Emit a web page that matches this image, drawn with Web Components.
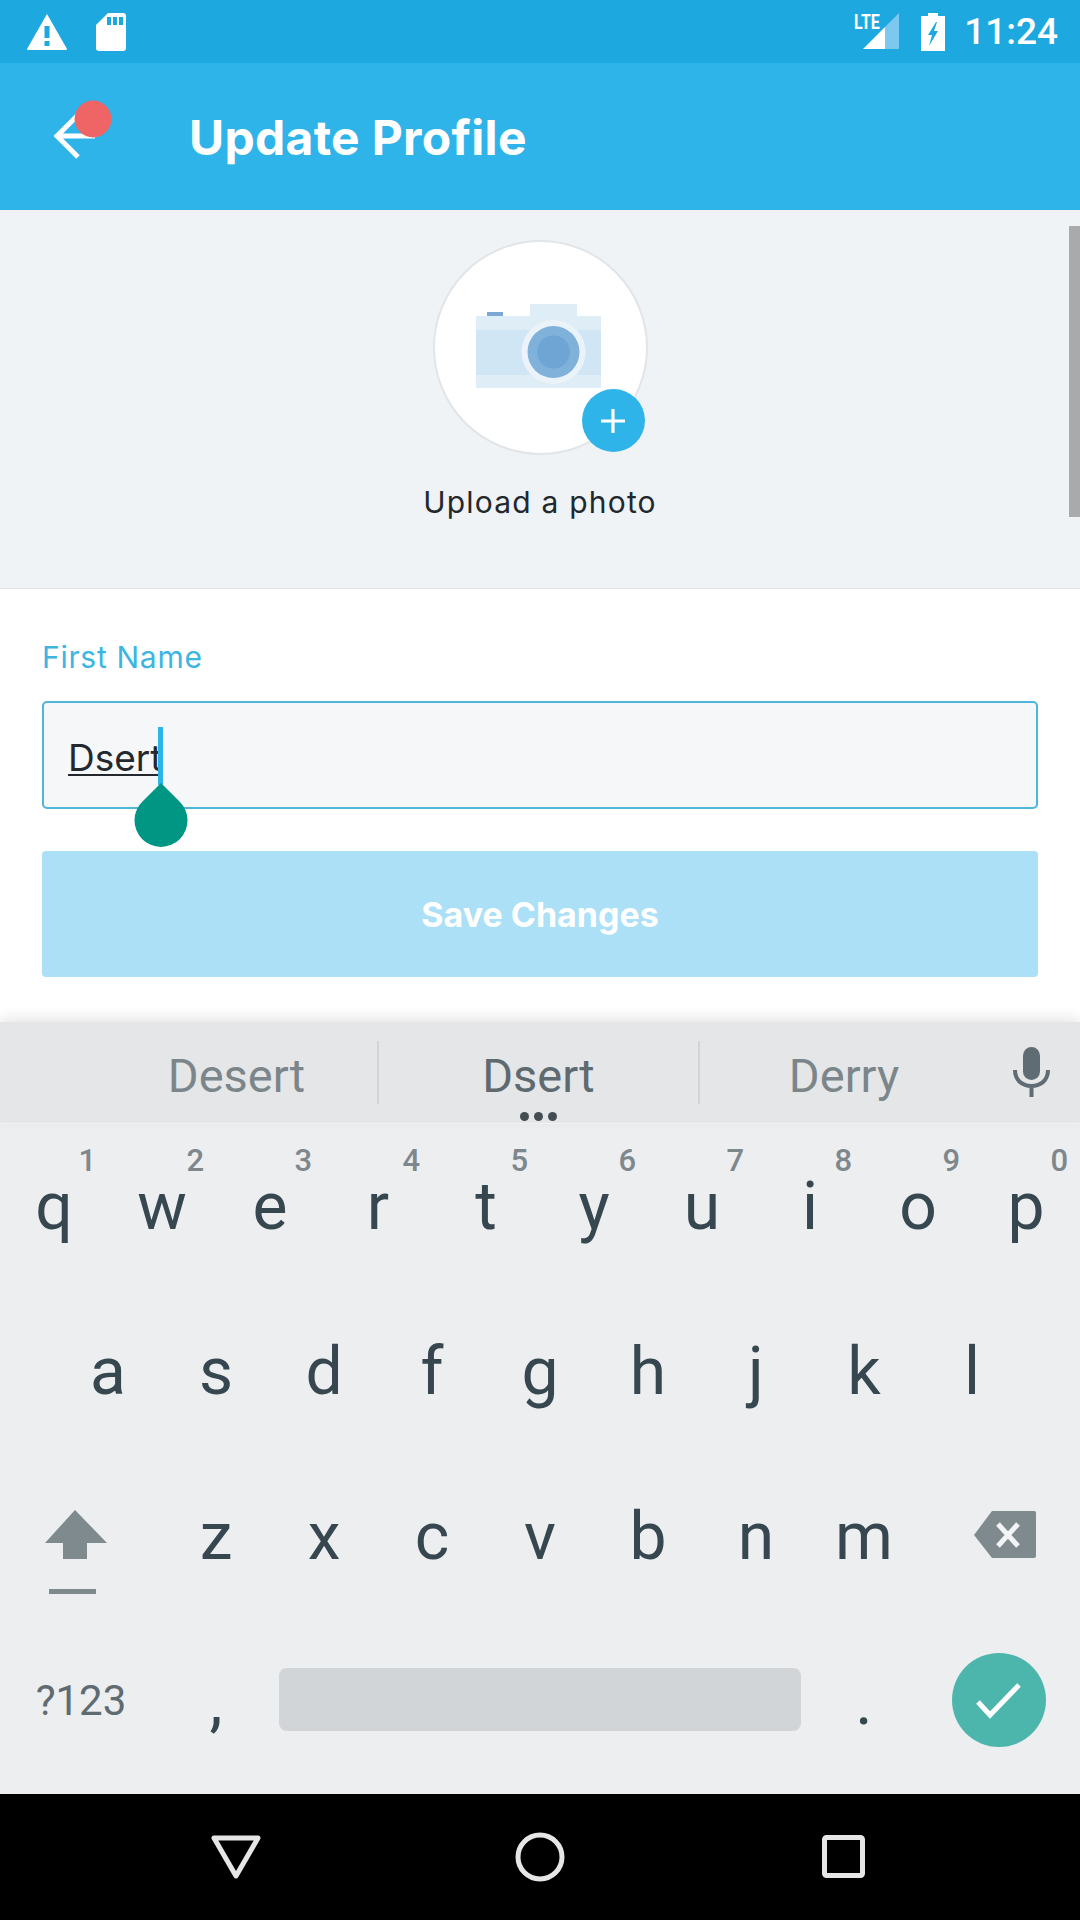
<!DOCTYPE html>
<html>
<head>
<meta charset="utf-8">
<style>
  html, body { margin: 0; padding: 0; background: #000; }
  body { width: 1080px; height: 1920px; overflow: hidden; font-family: Inter, Lato, sans-serif; }
</style>
</head>
<body>
<profile-screen>
  <status-bar slot="status" time="11:24"></status-bar>
  <app-bar slot="status" title="Update Profile"></app-bar>
  <photo-upload slot="content" label="Upload a photo"></photo-upload>
  <name-form slot="content" label="First Name" value="Dsert" action="Save Changes"></name-form>
  <suggest-bar slot="keyboard"></suggest-bar>
  <soft-keyboard slot="keyboard"></soft-keyboard>
  <nav-bar slot="keyboard"></nav-bar>
</profile-screen>

<script>
class ProfileScreen extends HTMLElement {
  constructor() {
    super();
    this.attachShadow({ mode: 'open' });
  }

  connectedCallback() {
    this.shadowRoot.innerHTML = `
      <style>
        :host { display: flex; flex-direction: column; width: 1080px; height: 1920px; background: #fff; position: relative; overflow: hidden; }
        .content { flex: 1; display: flex; flex-direction: column; position: relative; }
        .scrollbar { position: absolute; right: 0; top: 16px; width: 11px; height: 291px; background: #a8aaac; }
      </style>
      <slot name="status"></slot>
      <div class="content">
        <slot name="content"></slot>
        <div class="scrollbar"></div>
      </div>
      <slot name="keyboard"></slot>
    `;
  }
}

class StatusBar extends HTMLElement {
  constructor() {
    super();
    this.attachShadow({ mode: 'open' });
  }

  connectedCallback() {
    this.shadowRoot.innerHTML = `
      <style>
        :host { display: flex; align-items: center; justify-content: space-between; height: 63px; padding: 0 22px 0 27px; background: #1ea8e0; color: #fff; }
        .side { display: flex; align-items: center; }
        .warn { margin-right: 29px; }
        .signal { margin-right: 22px; }
        .battery { margin-right: 19px; }
        .time { font: 500 37px Roboto, sans-serif; line-height: 63px; }
        svg { display: block; }
      </style>
      <div class="side">
        <svg class="warn" width="40" height="36" viewBox="0 0 40 36">
          <path d="M20 0 L40 35 Q40 36 39 36 L1 36 Q0 36 0 35 Z" fill="#fff"/>
          <rect x="17.5" y="12" width="5" height="12" fill="#1ea8e0"/>
          <rect x="17.5" y="27" width="5" height="5" fill="#1ea8e0"/>
        </svg>
        <svg width="30" height="38" viewBox="0 0 30 38">
          <path d="M12 0 H27 Q30 0 30 3 V35 Q30 38 27 38 H3 Q0 38 0 35 V12 Z" fill="#fff"/>
          <rect x="11" y="4" width="4" height="8" fill="#1ea8e0"/>
          <rect x="17" y="4" width="4" height="8" fill="#1ea8e0"/>
          <rect x="23" y="4" width="4" height="8" fill="#1ea8e0"/>
        </svg>
      </div>
      <div class="side">
        <svg class="signal" width="45" height="45" viewBox="0 -4 45 45">
          <path d="M45 0 V36 H31 V14 Z" fill="#7cc8ef"/>
          <path d="M31 14 V36 H9 Z" fill="#fff"/>
          <text transform="translate(0 16) scale(.8 1)" font-family="Roboto, sans-serif" font-weight="700" font-size="20" fill="#fff">LTE</text>
        </svg>
        <svg class="battery" width="24" height="38" viewBox="0 0 24 38">
          <path d="M7 0 H17 V3 H24 V38 H0 V3 H7 Z" fill="#fff"/>
          <path d="M15 9 L7 22 H11 L8 33 L17 18 H13 L16 9 Z" fill="#1ea8e0"/>
        </svg>
        <span class="time">${this.getAttribute('time')}</span>
      </div>
    `;
  }
}

class AppBar extends HTMLElement {
  constructor() {
    super();
    this.attachShadow({ mode: 'open' });
  }

  connectedCallback() {
    this.shadowRoot.innerHTML = `
      <style>
        :host { display: flex; align-items: center; height: 147px; background: #2fb4ea; color: #fff; }
        .back { position: relative; width: 189px; height: 147px; flex: none; }
        .back svg { position: absolute; left: 0; top: 0; }
        .title { font-size: 48px; font-weight: 700; letter-spacing: .3px; white-space: nowrap; padding-top: 2px; }
      </style>
      <div class="back">
        <svg width="189" height="147" viewBox="0 0 189 147">
          <path d="M95 73 H58 M78 52 L57 73 L78 94" fill="none" stroke="#fff" stroke-width="5"/>
          <circle cx="93" cy="56" r="18.5" fill="#ef6464"/>
        </svg>
      </div>
      <div class="title">${this.getAttribute('title')}</div>
    `;
  }
}

class PhotoUpload extends HTMLElement {
  constructor() {
    super();
    this.attachShadow({ mode: 'open' });
  }

  connectedCallback() {
    this.shadowRoot.innerHTML = `
      <style>
        :host { display: flex; flex-direction: column; align-items: center; height: 379px; padding-top: 30px; box-sizing: border-box; background: #eff3f6; border-bottom: 1px solid #dfe3e6; }
        .circle { position: relative; width: 215px; height: 215px; box-sizing: border-box; border: 2px solid #e2e5e8; border-radius: 50%; background: #fff; display: flex; align-items: center; justify-content: center; }
        .badge { position: absolute; left: 147px; top: 147px; width: 63px; height: 63px; border-radius: 50%; background: #2fb4ea; display: flex; align-items: center; justify-content: center; }
        .label { margin-top: 28px; font-size: 30px; line-height: 38px; color: #22282d; letter-spacing: 1.2px; }
        svg { display: block; }
      </style>
      <div class="circle">
        <svg width="125" height="84" viewBox="0 0 125 84" style="margin:-4px 0 0 -3px">
          <rect x="54" y="0" width="47" height="13" fill="#dfedf6"/>
          <rect x="0" y="12" width="125" height="72" fill="#dfedf6"/>
          <rect x="0" y="26" width="125" height="45" fill="#d0e6f4"/>
          <rect x="11" y="8" width="16" height="4" fill="#7aa9d3"/>
          <circle cx="77.5" cy="48" r="32" fill="#e9f3f9"/>
          <circle cx="77.5" cy="48" r="26" fill="#7fb1db"/>
          <circle cx="77.5" cy="48" r="16.5" fill="#6fa5d5"/>
        </svg>
        <div class="badge">
          <svg width="26" height="26" viewBox="0 0 26 26"><path d="M13 1 V25 M1 13 H25" stroke="#fff" stroke-width="3.2"/></svg>
        </div>
      </div>
      <div class="label">${this.getAttribute('label')}</div>
    `;
  }
}

class NameForm extends HTMLElement {
  constructor() {
    super();
    this.attachShadow({ mode: 'open' });
  }

  connectedCallback() {
    this.shadowRoot.innerHTML = `
      <style>
        :host { display: flex; flex-direction: column; flex: 1; padding: 49px 42px 0; background: #fff; }
        .label { font-size: 30px; line-height: 38px; color: #3db5e3; letter-spacing: .7px; }
        .field { position: relative; margin-top: 25px; height: 108px; box-sizing: border-box; border: 2px solid #4db7da; border-radius: 5px; background: #f6f7f9; padding: 5px 0 0 24px; display: flex; align-items: center; }
        .value { font-size: 37px; color: #22282d; text-decoration: underline; text-decoration-thickness: 2px; text-underline-offset: 3px; }
        .caret { position: absolute; left: 114px; top: 24px; width: 5px; height: 58px; background: #2fb4ea; }
        .handle { position: absolute; left: 90px; top: 80px; display: block; }
        .save { margin-top: 42px; height: 126px; border-radius: 4px; background: #abe0f6; color: #fff; font-size: 34px; font-weight: 700; display: flex; align-items: center; justify-content: center; }
      </style>
      <div class="label">${this.getAttribute('label')}</div>
      <div class="field">
        <span class="value">${this.getAttribute('value')}</span>
        <div class="caret"></div>
        <svg class="handle" width="54" height="64" viewBox="0 0 54 64">
          <path d="M27 0 L45 18 A26.5 26.5 0 1 1 9 18 Z" fill="#009684"/>
        </svg>
      </div>
      <div class="save">${this.getAttribute('action')}</div>
    `;
  }
}

class SuggestBar extends HTMLElement {
  constructor() {
    super();
    this.attachShadow({ mode: 'open' });
  }

  connectedCallback() {
    this.shadowRoot.innerHTML = `
      <style>
        :host { display: grid; grid-template-columns: 379px 321px 288px 1fr; height: 102px; background: #e4e6e8; box-shadow: 0 -5px 12px rgba(0,0,0,.09); position: relative; border-bottom: 1px solid #f2f3f4; box-sizing: border-box; font: 47px Roboto, sans-serif; }
        .word { display: flex; align-items: center; justify-content: center; height: 63px; margin-top: 19px; padding-top: 5px; color: #7c868a; border-right: 2px solid #d2d5d7; box-sizing: border-box; }
        .word.first { padding-left: 96px; }
        .word.main { color: #5f6a70; position: relative; }
        .word.last { border: 0; }
        .dots { position: absolute; left: 141px; top: 71px; display: flex; gap: 5px; }
        .dots i { width: 9px; height: 9px; border-radius: 50%; background: #444d52; }
        svg { display: block; margin: 25px 0 0 25px; }
      </style>
      <div class="word first">Desert</div>
      <div class="word main">Dsert<div class="dots"><i></i><i></i><i></i></div></div>
      <div class="word last">Derry</div>
      <svg width="37" height="50" viewBox="0 0 37 50">
        <rect x="10" y="0" width="17" height="33" rx="8.5" fill="#5f6c74"/>
        <path d="M2 23 C2 33 9 39 18.5 39 C28 39 35 33 35 23 M18.5 38 V50" fill="none" stroke="#5f6c74" stroke-width="4"/>
      </svg>
    `;
  }
}

class KbKey extends HTMLElement {
  constructor() {
    super();
    this.attachShadow({ mode: 'open' });
  }

  connectedCallback() {
    const hint = this.getAttribute('hint');
    this.shadowRoot.innerHTML = `
      <style>
        :host { display: flex; align-items: center; justify-content: center; position: relative; font: 400 66px Roboto, sans-serif; color: #37474f; }
        .hint { position: absolute; top: 19px; right: 12px; font: 500 31px Roboto, sans-serif; color: #7e878c; line-height: 36px; }
      </style>
      <slot></slot>
      ${hint ? `<span class="hint">${hint}</span>` : ''}
    `;
  }
}

class SoftKeyboard extends HTMLElement {
  constructor() {
    super();
    this.attachShadow({ mode: 'open' });
  }

  connectedCallback() {
    const row = (letters, hints) => [...letters].map((l, i) =>
      `<kb-key${hints ? ` hint="${hints[i]}"` : ''}>${l}</kb-key>`).join('');
    this.shadowRoot.innerHTML = `
      <style>
        :host { display: grid; grid-auto-rows: 165px; height: 670px; background: #eceef0; box-sizing: border-box; }
        .row { display: grid; grid-auto-flow: column; grid-auto-columns: 108px; }
        .row.home { padding-left: 54px; }
        .row.mid { grid-template-columns: 162px repeat(7, 108px) 162px; }
        .row.bottom { grid-template-columns: 162px 108px 540px 108px 162px; }
        .sym { font-size: 42px; color: #5f6b70; padding-bottom: 2px; box-sizing: border-box; }
        .space { margin: 49px 9px 0; height: 63px; border-radius: 8px; background: #d2d5d8; }
        svg { display: block; }
      </style>
      <div class="row">${row('qwertyuiop', '1234567890')}</div>
      <div class="row home">${row('asdfghjkl')}</div>
      <div class="row mid">
        <svg width="162" height="165" viewBox="0 0 162 165">
          <path d="M75 56 L107 89 H87 V105 H63 V89 H45 Z" fill="#7e8a8e"/>
          <rect x="49" y="135" width="47" height="5" fill="#7e8a8e"/>
        </svg>
        ${row('zxcvbnm')}
        <svg width="162" height="165" viewBox="0 0 162 165">
          <path d="M74 57 H116 Q118 57 118 59 V102 Q118 104 116 104 H74 L56 81 Z" fill="#7e8a8e"/>
          <path d="M80 70 L100 92 M100 70 L80 92" stroke="#f2f4f5" stroke-width="5" fill="none"/>
        </svg>
      </div>
      <div class="row bottom">
        <kb-key class="sym">?123</kb-key>
        <kb-key>,</kb-key>
        <div class="space"></div>
        <kb-key>.</kb-key>
        <svg width="162" height="165" viewBox="0 0 162 165">
          <circle cx="81" cy="81" r="47" fill="#4db6ac"/>
          <path d="M60 83 L72 96 L101 66" fill="none" stroke="#fff" stroke-width="5"/>
        </svg>
      </div>
    `;
  }
}

class NavBar extends HTMLElement {
  constructor() {
    super();
    this.attachShadow({ mode: 'open' });
  }

  connectedCallback() {
    this.shadowRoot.innerHTML = `
      <style>
        :host { display: block; height: 126px; background: #000; }
        svg { display: block; }
      </style>
      <svg width="1080" height="126" viewBox="0 0 1080 126" fill="none" stroke="#e6e6e6" stroke-width="5" stroke-linejoin="round">
        <path d="M214 44 H258 L236 82 Z"/>
        <circle cx="540" cy="63" r="22"/>
        <rect x="824.5" y="43.5" width="38" height="38" rx="2"/>
      </svg>
    `;
  }
}

customElements.define('profile-screen', ProfileScreen);
customElements.define('status-bar', StatusBar);
customElements.define('app-bar', AppBar);
customElements.define('photo-upload', PhotoUpload);
customElements.define('name-form', NameForm);
customElements.define('suggest-bar', SuggestBar);
customElements.define('kb-key', KbKey);
customElements.define('soft-keyboard', SoftKeyboard);
customElements.define('nav-bar', NavBar);
</script>
</body>
</html>
